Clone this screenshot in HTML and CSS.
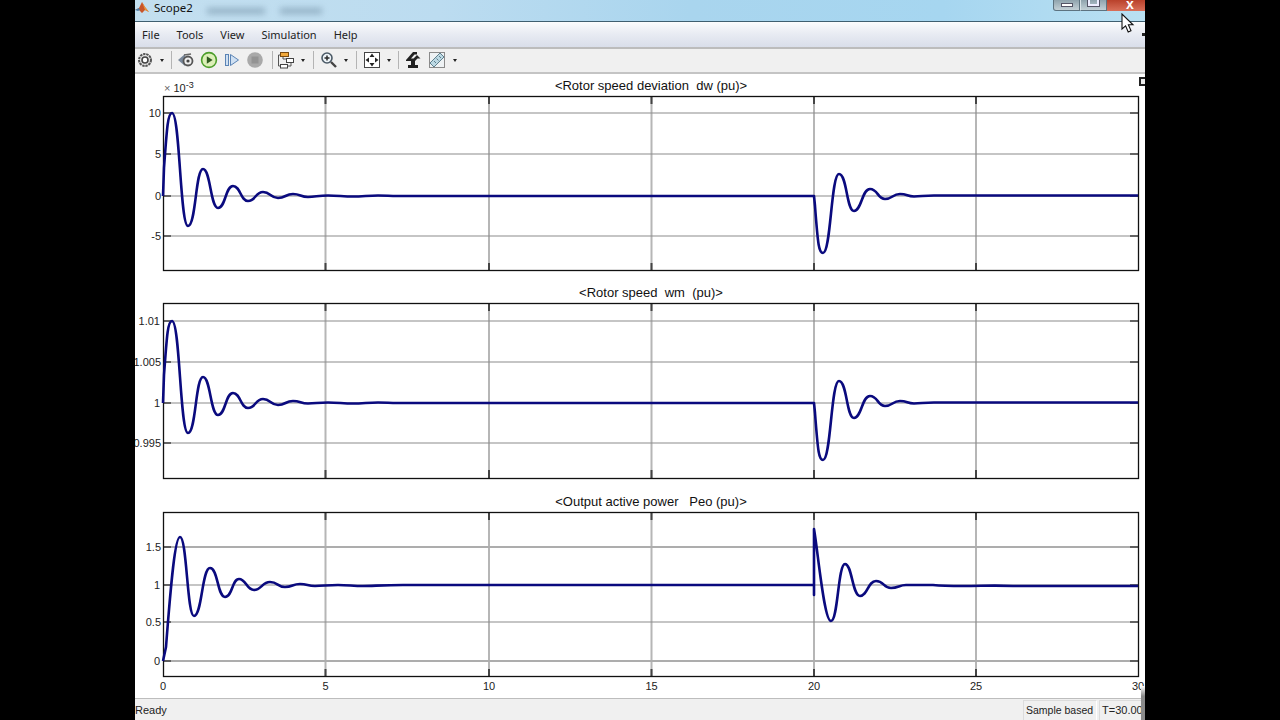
FILE: index.html
```html
<!DOCTYPE html>
<html>
<head>
    <title>Scope2</title>
    <link rel="stylesheet" href="styles.css">
</head>

<body>
<div class="window">
    <!-- title bar -->
    <div class="titlebar">
        <svg class="app-icon" width="14" height="14" viewBox="0 0 14 14">
            <path d="M0 9 L4 7 L7 1 L10 6 L14 11 L10 9 L7 12 L4 9 Z" fill="#c8552a"/>
            <path d="M7 1 L10 6 L14 11 L10 9 Z" fill="#e8963e"/>
            <path d="M0 9 L4 7 L5 9 L3 10 Z" fill="#4d7fa8"/>
        </svg>
        <span class="title-text">Scope2</span>
        <span class="title-blur wide"></span>
        <span class="title-blur"></span>
    </div>
    <div class="wincontrols">
        <div class="winbtn"><span class="min-glyph"></span></div>
        <div class="winbtn"><span class="max-glyph"></span></div>
        <div class="winbtn close">x</div>
    </div>

    <!-- menu -->
    <div class="menubar">
        <span>File</span>
        <span>Tools</span>
        <span>View</span>
        <span>Simulation</span>
        <span>Help</span>
    </div>
    <span class="menu-mark"></span>

    <!-- toolbar -->
    <div class="toolbar">
        <div class="group first">
            <div class="tool">
                <svg width="16" height="16" viewBox="0 0 16 16">
                    <circle cx="8" cy="8" r="6" fill="#e4e4e4" stroke="#555" stroke-width="2" stroke-dasharray="2.4 0.8"/>
                    <circle cx="8" cy="8" r="3" fill="#fff" stroke="#444" stroke-width="1.6"/>
                </svg>
            </div>
            <span class="caret"></span>
        </div>
        <div class="group g2">
            <div class="tool">
                <svg width="18" height="16" viewBox="0 0 18 16">
                    <path d="M1 8 L8 2 L8 14 Z" fill="#78879a"/>
                    <circle cx="11" cy="9" r="4.5" fill="#eee" stroke="#555" stroke-width="1.8"/>
                    <circle cx="11" cy="9" r="1.6" fill="#444"/>
                    <path d="M7 3 L14 2" stroke="#666" stroke-width="1.6"/>
                </svg>
            </div>
            <div class="tool">
                <svg width="18" height="18" viewBox="0 0 18 18">
                    <circle cx="9" cy="9" r="7.4" fill="#dcefb8" stroke="#4d9e2c" stroke-width="1.6"/>
                    <path d="M6.8 5.2 L12.6 9 L6.8 12.8 Z" fill="#2f5a20"/>
                </svg>
            </div>
            <div class="tool">
                <svg width="16" height="16" viewBox="0 0 16 16">
                    <rect x="1.5" y="2.5" width="3" height="11" fill="#cfe0f2" stroke="#5b84b5"/>
                    <path d="M6.5 2.5 L14.5 8 L6.5 13.5 Z" fill="#cfe0f2" stroke="#5b84b5"/>
                </svg>
            </div>
            <div class="tool">
                <svg width="16" height="16" viewBox="0 0 16 16">
                    <circle cx="8" cy="8" r="7.8" fill="#a9a9a9"/>
                    <rect x="4.5" y="4.5" width="7" height="7" fill="#939393"/>
                </svg>
            </div>
        </div>
        <div class="group g3">
            <div class="tool">
                <svg width="18" height="18" viewBox="0 0 18 18">
                    <rect x="3.5" y="1.5" width="8" height="4" fill="#f2a93c" stroke="#7a4a10"/>
                    <rect x="9.5" y="7.5" width="7" height="4" fill="#fff" stroke="#444"/>
                    <rect x="3.5" y="13.5" width="7" height="3.5" fill="#fff" stroke="#444"/>
                    <path d="M3 4 H1.5 V15 H3 M6 6 V8 H9 M11 15 H14 V12" fill="none" stroke="#555"/>
                </svg>
            </div>
            <span class="caret"></span>
        </div>
        <div class="group g4">
            <div class="tool">
                <svg width="18" height="18" viewBox="0 0 18 18">
                    <circle cx="7" cy="7" r="5" fill="#eef4f8" stroke="#4b5a66" stroke-width="1.6"/>
                    <path d="M4.5 7 H9.5 M7 4.5 V9.5" stroke="#2a2a2a" stroke-width="1.5"/>
                    <path d="M11 11 L16 16" stroke="#444" stroke-width="2.4"/>
                </svg>
            </div>
            <span class="caret"></span>
        </div>
        <div class="group g5">
            <div class="tool">
                <svg width="18" height="18" viewBox="0 0 18 18">
                    <rect x="1.5" y="1.5" width="15" height="15" fill="#fff" stroke="#444"/>
                    <path d="M9 2.5 L11.5 6 H6.5 Z M9 15.5 L11.5 12 H6.5 Z M2.5 9 L6 6.5 V11.5 Z M15.5 9 L12 6.5 V11.5 Z" fill="#222"/>
                </svg>
            </div>
            <span class="caret"></span>
        </div>
        <div class="group g6">
            <div class="tool">
                <svg width="16" height="18" viewBox="0 0 16 18">
                    <path d="M1 9 L8 1 H12 V3.5 H9.5 L6 7.5 H8.5 L12 4 L15.5 7.5 H12.5 L10 10 V14 H13 V17 H3 V14 H6 V10 H1 Z" fill="#222"/>
                </svg>
            </div>
            <div class="tool">
                <svg width="18" height="18" viewBox="0 0 18 18">
                    <rect x="1.5" y="1.5" width="15" height="15" fill="#eef2f4" stroke="#8a8a8a"/>
                    <path d="M2 12 L12 2 L16 6 L6 16 Z" fill="#bcd9e4" stroke="#5f7f8c"/>
                    <path d="M6 10 L8 12 M8.5 7.5 L10.5 9.5 M11 5 L13 7" stroke="#5f7f8c"/>
                </svg>
            </div>
            <span class="caret"></span>
        </div>
    </div>

    <!-- scope axes -->
    <div class="plots">
        <span class="undock"></span>

        <div class="scope">
            <div class="plot-title">&lt;Rotor speed deviation  dw (pu)&gt;</div>
            <svg class="axes h1" viewBox="0 0 976 175">
                <path class="vgrid" d="M162.5 0 V175 M326 0 V175 M488.5 0 V175 M651 0 V175 M813 0 V175"/>
                <path class="hgrid" d="M0 17 H975 M0 58 H975 M0 100 H975 M0 140 H975"/>
                <path class="ticks" d="M162.5 0 V8 M326 0 V8 M488.5 0 V8 M651 0 V8 M813 0 V8 M162.5 167 V175 M326 167 V175 M488.5 167 V175 M651 167 V175 M813 167 V175"/>
                <path class="ticks thin" d="M0 17 H8 M0 58 H8 M0 100 H8 M0 140 H8 M967 17 H975 M967 58 H975 M967 100 H975 M967 140 H975"/>
                <rect class="box" x="0.5" y="0.5" width="975" height="174"/>
                <path class="curve" d="M0 100 L1 72 C4 30 5 17 9 17 C17 17 17 130 25 130 S32.5 73 40 73 S47.5 112 55 112 S62.5 90 70 90 S77.5 105 85 105 S92.5 96 100 96 S107.5 102 115 102 S122.5 98 130 98 S137.5 101 145 101 S155 99.5 165 99.5 S180 100.5 190 100.5 S205 99.5 215 99.5 S225 100 235 100 H651 L652 110 C655 150 656 157 660 157 C668 157 668 78 676 78 S683.5 115 691 115 S699 93 707 93 S714.5 103 722 103 S729.5 98 737 98 S744 100.5 751 100.5 S761 99.5 771 99.5 H786 H975"/>
                <text class="lbl" x="-2" y="21">10</text>
                <text class="lbl" x="-2" y="62">5</text>
                <text class="lbl" x="-2" y="104">0</text>
                <text class="lbl" x="-2" y="144">-5</text>
                <text class="exp" x="1" y="-4"><tspan class="times">×</tspan> 10<tspan class="sup" dy="-4">-3</tspan></text>
            </svg>
        </div>

        <div class="scope">
            <div class="plot-title">&lt;Rotor speed  wm  (pu)&gt;</div>
            <svg class="axes h2" viewBox="0 0 976 177">
                <path class="vgrid" d="M162.5 0 V175 M326 0 V175 M488.5 0 V175 M651 0 V175 M813 0 V175"/>
                <path class="hgrid" d="M0 18 H975 M0 59 H975 M0 100 H975 M0 140 H975"/>
                <path class="ticks" d="M162.5 0 V8 M326 0 V8 M488.5 0 V8 M651 0 V8 M813 0 V8 M162.5 167 V175 M326 167 V175 M488.5 167 V175 M651 167 V175 M813 167 V175"/>
                <path class="ticks thin" d="M0 18 H8 M0 59 H8 M0 100 H8 M0 140 H8 M967 18 H975 M967 59 H975 M967 100 H975 M967 140 H975"/>
                <rect class="box" x="0.5" y="0.5" width="975" height="175"/>
                <path class="curve" d="M0 100 L1 72 C4 30 5 18 9 18 C17 18 17 130 25 130 S32.5 74 40 74 S47.5 112 55 112 S62.5 90 70 90 S77.5 105 85 105 S92.5 96 100 96 S107.5 102 115 102 S122.5 98 130 98 S137.5 100.5 145 100.5 S155 99.5 165 99.5 S180 100.5 190 100.5 S205 99.5 215 99.5 S225 100 235 100 H651 L652 110 C655 150 656 157 660 157 C668 157 668 78 676 78 S683.5 115 691 115 S699 93 707 93 S714.5 103 722 103 S729.5 98 737 98 S744 100.5 751 100.5 S761 99.5 771 99.5 H786 H975"/>
                <text class="lbl" x="-3" y="22">1.01</text>
                <text class="lbl" x="-2" y="63">1.005</text>
                <text class="lbl" x="-3" y="104">1</text>
                <text class="lbl" x="-2" y="144">0.995</text>
            </svg>
        </div>

        <div class="scope">
            <div class="plot-title">&lt;Output active power   Peo (pu)&gt;</div>
            <svg class="axes h3" viewBox="0 0 976 166">
                <path class="vgrid" d="M162.5 0 V165 M326 0 V165 M488.5 0 V165 M651 0 V165 M813 0 V165"/>
                <path class="hgrid light" d="M0 35 H975 M0 149 H975"/>
                <path class="hgrid" d="M0 73 H975 M0 110 H975"/>
                <path class="ticks" d="M162.5 0 V8 M326 0 V8 M488.5 0 V8 M651 0 V8 M813 0 V8 M162.5 157 V165 M326 157 V165 M488.5 157 V165 M651 157 V165 M813 157 V165"/>
                <path class="ticks thin" d="M0 35 H8 M0 73 H8 M0 110 H8 M0 149 H8 M967 35 H975 M967 73 H975 M967 110 H975 M967 149 H975"/>
                <rect class="box" x="0.5" y="0.5" width="975" height="164"/>
                <path class="curve" d="M0 149 L3 135 C8 70 12 25 17 25 C24 25 24 104 31 104 C39 104 39 56 47 56 S54.5 85 62 85 S69 67 76 67 S83.5 78 91 78 S99 70 107 70 S114.5 75 122 75 S129.5 72 137 72 S144.5 74 152 74 S165 73 175 73 S190 74 200 74 S220 73 240 73 H651 V83 V17 C655 40 661 109 668 109 C675 109 675 52 682 52 S689.5 84 697 84 S705 69 713 69 S720.5 76 728 76 S736 73 743 73 H770 S780 74 800 74 S830 73 850 74 H975"/>
                <text class="lbl" x="-2" y="39">1.5</text>
                <text class="lbl" x="-3" y="77">1</text>
                <text class="lbl" x="-2" y="114">0.5</text>
                <text class="lbl" x="-3" y="153">0</text>
                <text class="xlbl" x="0" y="178">0</text>
                <text class="xlbl" x="162.5" y="178">5</text>
                <text class="xlbl" x="326" y="178">10</text>
                <text class="xlbl" x="488.5" y="178">15</text>
                <text class="xlbl" x="651" y="178">20</text>
                <text class="xlbl" x="813" y="178">25</text>
                <text class="xlbl" x="975" y="178">30</text>
            </svg>
        </div>
    </div>

    <!-- status bar -->
    <div class="statusbar">
        <span class="ready">Ready</span>
        <span class="cell sample">Sample based</span>
        <span class="cell time">T=30.000</span>
    </div>
    <span class="edge-fade"></span>

    <svg class="cursor" width="14" height="21" viewBox="0 0 14 21">
        <path d="M1 1 V16 L4.6 12.8 L7.2 19 L10 17.8 L7.4 11.8 H12 Z" fill="#fff" stroke="#111" stroke-width="1.1"/>
    </svg>
</div>
</body>

</html>
```

FILE: styles.css
```css
*{
    box-sizing: border-box;
}
body{
    margin: 0;
    height: 720px;
    background: #000;
    overflow: hidden;
}
.window{
    position: relative;
    width: 1010px;
    height: 720px;
    margin-left: 135px;
    background: #fff;
    display: flex;
    flex-direction: column;
    overflow: hidden;
    font-family: "Liberation Sans", Arial, sans-serif;
}

/* title bar */
.titlebar{
    height: 22px;
    display: flex;
    align-items: center;
    padding-bottom: 6px;
    border-bottom: 1px solid #3f5f70;
    background: linear-gradient(90deg, #c3dfef 0%, #bcdcf0 30%, #a9d5ee 55%, #a6d6f0 80%, #b9e0f2 100%);
}
.app-icon{
    margin-right: 5px;
}
.title-text{
    font-family: "Noto Sans", sans-serif;
    font-size: 11.5px;
    color: #111;
}
.title-blur{
    width: 42px;
    height: 6px;
    margin: 7px 0 0 15px;
    background: #7f9db2;
    filter: blur(3px);
    opacity: 0.7;
}
.title-blur.wide{
    width: 58px;
    margin-left: 14px;
}
.wincontrols{
    position: absolute;
    top: 0;
    right: 0;
    display: flex;
    height: 11px;
}
.winbtn{
    width: 27px;
    height: 11px;
    background: linear-gradient(#8fa3ad, #c3d0d6);
    border: 1px solid #5d7380;
    border-top: 0;
    border-left-color: #d8e2e6;
    position: relative;
    overflow: hidden;
}
.winbtn:first-child{
    border-left-color: #5d7380;
    border-bottom-left-radius: 3px;
}
.winbtn.close{
    width: 38px;
    background: linear-gradient(#b9412b, #d9705a);
    border: 0;
    color: #fff;
    font-size: 14px;
    font-weight: bold;
    line-height: 8px;
    text-align: center;
    padding-left: 8px;
}
.min-glyph{
    position: absolute;
    left: 7px;
    top: 3px;
    width: 12px;
    height: 4px;
    background: #fff;
    border: 1px solid #556;
}
.max-glyph{
    position: absolute;
    left: 7px;
    top: -3px;
    width: 11px;
    height: 9px;
    border: 2px solid #eef;
    outline: 1px solid #556;
}

/* menu */
.menubar{
    height: 25px;
    display: flex;
    align-items: center;
    gap: 17px;
    padding-left: 7px;
    font-family: "Noto Sans", sans-serif;
    font-size: 11px;
    color: #222;
    background: linear-gradient(#fbfcfd, #e9ecf3 45%, #d9deea);
}
.menu-mark{
    position: absolute;
    top: 33px;
    right: 0;
    width: 3px;
    height: 3px;
    background: #222;
}

/* toolbar */
.toolbar{
    height: 27px;
    display: flex;
    align-items: center;
    padding-bottom: 1px;
    background: #f0f0f0;
    border-top: 2px solid #bcbcbc;
    border-bottom: 2px solid #c4c4c4;
}
.group{
    height: 18px;
    display: flex;
    align-items: center;
    gap: 3px;
    padding: 0 5px;
    border-left: 1px solid #b4b4b4;
}
.group.first{
    padding-left: 0;
    border-left: 0;
}
.group.g2{
    padding: 0 7px 0 4px;
}
.group.g3{
    padding: 0 6px 0 3px;
}
.group.g4{
    padding-right: 6px;
}
.group.g6{
    padding-left: 4px;
    gap: 4px;
}
.tool{
    width: 20px;
    height: 20px;
    display: flex;
    align-items: center;
    justify-content: center;
}
.caret{
    width: 8px;
    display: flex;
    justify-content: center;
}
.caret::after{
    content: "";
    border: 2.5px solid transparent;
    border-top: 3px solid #222;
    border-bottom: 0;
}

/* scope axes */
.plots{
    flex: 1;
    position: relative;
    padding-left: 28px;
    display: flex;
    flex-direction: column;
    gap: 10px;
    background: #fff;
}
.plot-title{
    height: 22px;
    width: 976px;
    padding-top: 1px;
    line-height: 22px;
    text-align: center;
    font-size: 13px;
    color: #111;
    white-space: pre;
}
.axes{
    display: block;
    width: 976px;
    overflow: visible;
}
.axes.h1{
    height: 175px;
}
.axes.h2{
    height: 177px;
}
.axes.h3{
    height: 166px;
}
.vgrid{
    fill: none;
    stroke: #b6b6b6;
    stroke-width: 2;
}
.hgrid{
    fill: none;
    stroke: #8c8c8c;
    stroke-width: 1.2;
}
.hgrid.light{
    stroke: #adadad;
    stroke-width: 2;
}
.ticks{
    fill: none;
    stroke: #444;
    stroke-width: 2;
}
.ticks.thin{
    stroke-width: 1.4;
}
.box{
    fill: none;
    stroke: #111;
    stroke-width: 1.3;
}
.curve{
    fill: none;
    stroke: #0a0a7e;
    stroke-width: 2.6;
    stroke-linejoin: round;
}
.lbl{
    font-size: 11px;
    fill: #222;
    text-anchor: end;
}
.xlbl{
    font-size: 11px;
    fill: #222;
    text-anchor: middle;
}
.exp{
    font-size: 11px;
    fill: #222;
}
.times{
    fill: #666;
}
.sup{
    font-size: 9px;
}
.undock{
    position: absolute;
    top: 3px;
    right: 0;
    width: 6px;
    height: 9px;
    border: 2px solid #222;
    border-right: 0;
    background: #eee;
}

/* status bar */
.statusbar{
    height: 22px;
    display: flex;
    align-items: center;
    padding-top: 1px;
    background: #f0f0f0;
    border-top: 1px solid #bdbdbd;
    font-size: 11px;
    color: #222;
}
.ready{
    flex: 1;
}
.cell{
    height: 21px;
    line-height: 19px;
    padding-left: 2px;
    border: 1px solid #dcdcdc;
    border-right-color: #fff;
    border-bottom-color: #fff;
    white-space: nowrap;
}
.sample{
    width: 74px;
    margin-right: 2px;
    font-size: 10.5px;
}
.time{
    width: 46px;
}
.edge-fade{
    position: absolute;
    right: 0;
    bottom: 0;
    width: 4px;
    height: 34px;
    background: linear-gradient(#fff, #8a8a8a 30%);
}

.cursor{
    position: absolute;
    left: 986px;
    top: 13px;
}
```
